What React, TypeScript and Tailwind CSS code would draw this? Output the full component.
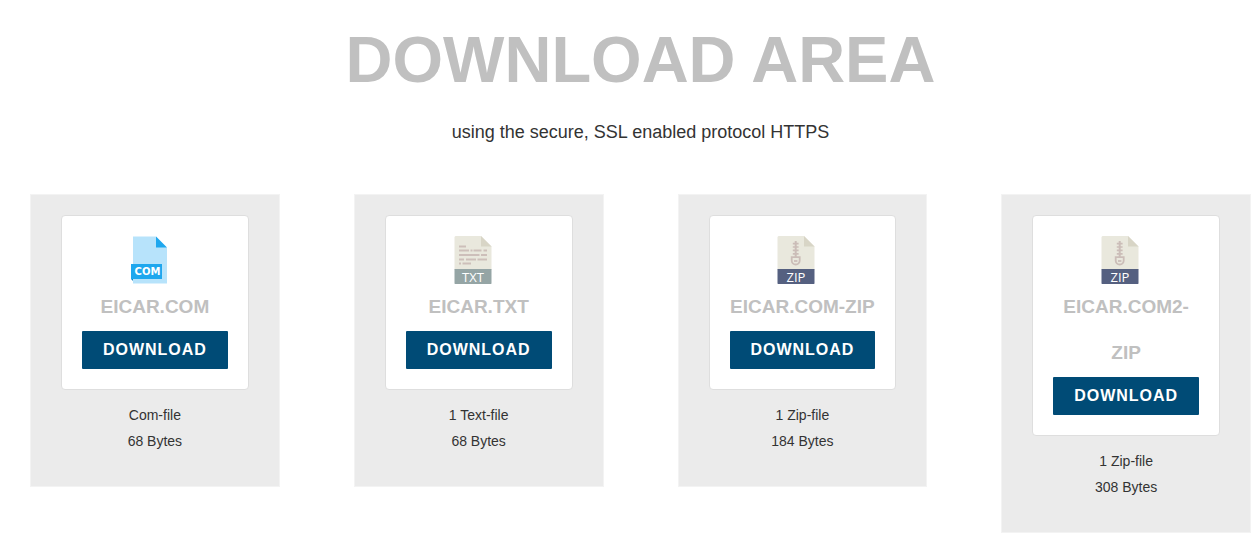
type IconKind = 'com' | 'txt' | 'zip';

interface Download {
  name: string;
  icon: IconKind;
  kind: string;
  size: string;
}

const downloads: Download[] = [
  { name: 'EICAR.COM', icon: 'com', kind: 'Com-file', size: '68 Bytes' },
  { name: 'EICAR.TXT', icon: 'txt', kind: '1 Text-file', size: '68 Bytes' },
  { name: 'EICAR.COM-ZIP', icon: 'zip', kind: '1 Zip-file', size: '184 Bytes' },
  { name: 'EICAR.COM2-ZIP', icon: 'zip', kind: '1 Zip-file', size: '308 Bytes' },
];

function ComIcon() {
  return (
    <svg width="48" height="48" viewBox="0 0 48 48" aria-hidden="true">
      <path d="M8 .5h23L42 12v35.500H8z" fill="#b7e3fb" />
      <path d="M31 .5 42 11.500H31z" fill="#1ea7ee" />
      <path d="M6 43h2v2z" fill="#1385c4" />
      <path d="M6 28h31v15H6z" fill="#1ea7ee" />
      <text x="22.500" y="39" textAnchor="middle" fontSize="10" fontWeight="700" fill="#fff" fontFamily="'DejaVu Sans', sans-serif">
        COM
      </text>
    </svg>
  );
}

function SheetIcon({ kind }: { kind: 'txt' | 'zip' }) {
  return (
    <svg width="48" height="48" viewBox="0 0 48 48" aria-hidden="true">
      <path d="M6.500 0H32l10.500 10.500V34h-37V1z" fill="#e9e8dd" />
      <path d="M32 0l10.500 10.500H32z" fill="#d8d5c6" />
      {kind === 'txt' ? (
        <path
          d="M10 10.500h7M10 14.500h10M21.500 14.500h2M24.500 14.500h8M34.500 14.500h3.500M10 19h20.500M32 19h6M10 23.500h5M17 23.500h10M28.500 23.500h9.500M10 27.500h2M13.500 27.500h8.500"
          stroke="#cdbfba"
          strokeWidth="1.800"
          fill="none"
        />
      ) : (
        <g stroke="#cbbdb8" fill="none">
          <path d="M23.700 5v16" strokeWidth="2" />
          <path d="M20.800 7.700h5.800M20.800 11h5.800M20.800 14.400h5.800M20.800 17.800h5.800" strokeWidth="1.700" />
          <path d="M19.700 21.200h8v3.300a4 4 0 0 1-8 0z" strokeWidth="1.800" />
          <path d="M22 25h3.400" strokeWidth="1.800" />
        </g>
      )}
      <path d="M5.500 33h37v14.500l-.5.500H6l-.5-.5z" fill={kind === 'txt' ? '#95a5a5' : '#556080'} />
      <text x="24" y="45.500" textAnchor="middle" fontSize="13" fill="#fff" fontFamily="'Open Sans', 'Noto Sans', sans-serif">
        {kind === 'txt' ? 'TXT' : 'ZIP'}
      </text>
    </svg>
  );
}

function DownloadCard({ item }: { item: Download }) {
  return (
    <article className="border border-[#f3f3f3] bg-[#ebebeb] px-[30px] pt-5 pb-8 text-center">
      <div className="flex flex-col items-center rounded border border-[#dedede] bg-white p-5">
        <div className="mr-3">
          {item.icon === 'com' ? <ComIcon /> : <SheetIcon kind={item.icon} />}
        </div>
        <h2 className="mb-px text-[19px] leading-[46px] font-bold text-[#c0c0c0]">{item.name}</h2>
        <button
          type="button"
          aria-label={`Download ${item.name}`}
          className="w-full cursor-pointer rounded-[1px] bg-[#004b76] py-[7px] text-base leading-6 font-bold tracking-[1px] text-white"
        >
          DOWNLOAD
        </button>
      </div>
      <div className="mt-3 text-sm leading-[26px]">
        <p>{item.kind}</p>
        <p>{item.size}</p>
      </div>
    </article>
  );
}

export default function App() {
  return (
    <main className="bg-white pt-5 pr-1.5 pb-1.5 pl-[30px] font-['Liberation_Sans',Arial,sans-serif] text-[#333]">
      <header className="text-center">
        <h1 className="text-[65px] leading-[80px] font-bold text-[#c0c0c0]">DOWNLOAD AREA</h1>
        <p className="mt-4 text-lg leading-8">using the secure, SSL enabled protocol HTTPS</p>
      </header>
      <section className="mt-[46px] grid grid-cols-4 items-start gap-[74px]">
        {downloads.map((item) => (
          <DownloadCard key={item.name} item={item} />
        ))}
      </section>
    </main>
  );
}
